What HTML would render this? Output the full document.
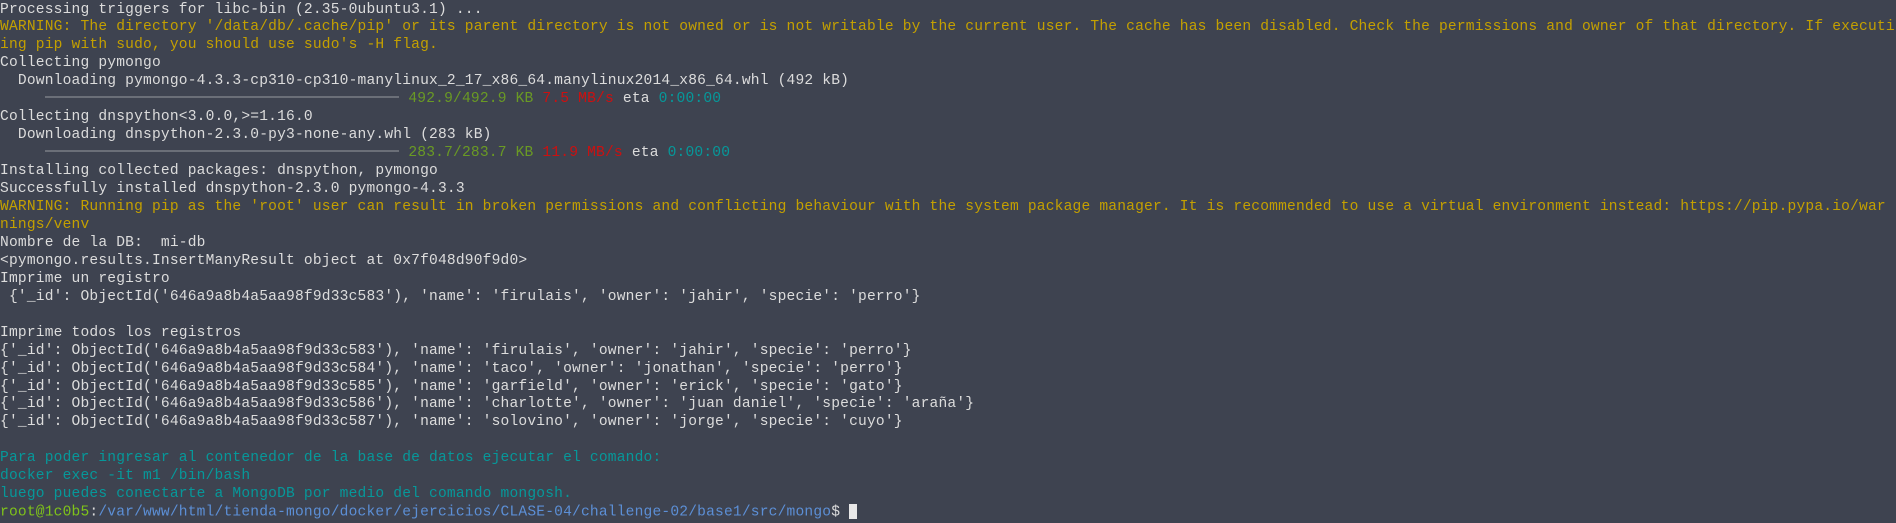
<!DOCTYPE html>
<html><head><meta charset="utf-8"><style>
html,body{margin:0;padding:0;background:#3e4350;width:1896px;height:508px;overflow:hidden}
pre{margin:0;padding:0;position:absolute;top:1.5px;left:0;font-family:"Liberation Mono","DejaVu Sans Mono",monospace;font-size:14.6px;line-height:17.96px;letter-spacing:0.18px;color:#dcdcdc;white-space:pre;}
.y{color:#c4a000}.g{color:#6a9a24}.r{color:#cc1010}.c{color:#06989a}.gb{color:#7fc31a}.b{color:#5c8fd6}
.bar{display:inline-block;width:40.5ch;height:2px;background:#6b6f78;vertical-align:middle;margin-top:-2px}
.cur{display:inline-block;width:8px;height:15px;background:#e8e8e8;vertical-align:middle}
</style></head><body><pre>Processing triggers for libc-bin (2.35-0ubuntu3.1) ...
<span class="y">WARNING: The directory '/data/db/.cache/pip' or its parent directory is not owned or is not writable by the current user. The cache has been disabled. Check the permissions and owner of that directory. If executi
ing pip with sudo, you should use sudo's -H flag.</span>
Collecting pymongo
  Downloading pymongo-4.3.3-cp310-cp310-manylinux_2_17_x86_64.manylinux2014_x86_64.whl (492 kB)
     <span class="bar"></span> <span class="g">492.9/492.9 KB</span> <span class="r">7.5 MB/s</span> eta <span class="c">0:00:00</span>
Collecting dnspython&lt;3.0.0,&gt;=1.16.0
  Downloading dnspython-2.3.0-py3-none-any.whl (283 kB)
     <span class="bar"></span> <span class="g">283.7/283.7 KB</span> <span class="r">11.9 MB/s</span> eta <span class="c">0:00:00</span>
Installing collected packages: dnspython, pymongo
Successfully installed dnspython-2.3.0 pymongo-4.3.3
<span class="y">WARNING: Running pip as the 'root' user can result in broken permissions and conflicting behaviour with the system package manager. It is recommended to use a virtual environment instead: https://pip.pypa.io/war
nings/venv</span>
Nombre de la DB:  mi-db
&lt;pymongo.results.InsertManyResult object at 0x7f048d90f9d0&gt;
Imprime un registro
 {'_id': ObjectId('646a9a8b4a5aa98f9d33c583'), 'name': 'firulais', 'owner': 'jahir', 'specie': 'perro'}

Imprime todos los registros
{'_id': ObjectId('646a9a8b4a5aa98f9d33c583'), 'name': 'firulais', 'owner': 'jahir', 'specie': 'perro'}
{'_id': ObjectId('646a9a8b4a5aa98f9d33c584'), 'name': 'taco', 'owner': 'jonathan', 'specie': 'perro'}
{'_id': ObjectId('646a9a8b4a5aa98f9d33c585'), 'name': 'garfield', 'owner': 'erick', 'specie': 'gato'}
{'_id': ObjectId('646a9a8b4a5aa98f9d33c586'), 'name': 'charlotte', 'owner': 'juan daniel', 'specie': 'araña'}
{'_id': ObjectId('646a9a8b4a5aa98f9d33c587'), 'name': 'solovino', 'owner': 'jorge', 'specie': 'cuyo'}

<span class="c">Para poder ingresar al contenedor de la base de datos ejecutar el comando:
docker exec -it m1 /bin/bash
luego puedes conectarte a MongoDB por medio del comando mongosh.</span>
<span class="gb">root@1c0b5</span>:<span class="b">/var/www/html/tienda-mongo/docker/ejercicios/CLASE-04/challenge-02/base1/src/mongo</span>$ <span class="cur"></span></pre></body></html>
